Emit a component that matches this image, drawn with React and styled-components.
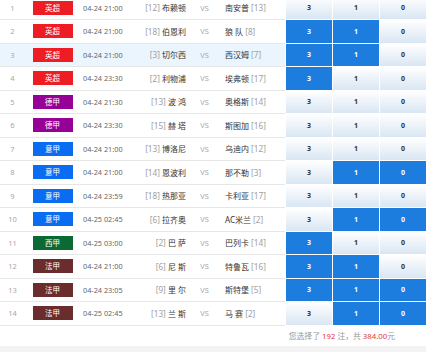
import React from 'react';
import styled, { createGlobalStyle } from 'styled-components';

const GlobalStyle = createGlobalStyle`
  html, body {
    margin: 0;
    padding: 0;
    background: #fff;
    overflow: hidden;
  }
  body {
    font-family: "Noto Sans", "Noto Sans CJK SC", sans-serif;
  }
`;

const LEAGUE_COLORS = {
  英超: '#ee1d23',
  德甲: '#960096',
  意甲: '#0a6cf0',
  西甲: '#0b6a34',
  法甲: '#6a2c2c',
};

const matches = [
  { league: '英超', time: '04-24 21:00', hr: 12, home: '布赖顿', away: '南安普', ar: 13, sel: [] },
  { league: '英超', time: '04-24 21:00', hr: 18, home: '伯恩利', away: '狼 队', ar: 8, sel: [0, 1] },
  { league: '英超', time: '04-24 21:00', hr: 3, home: '切尔西', away: '西汉姆', ar: 7, sel: [0, 1], hover: true },
  { league: '英超', time: '04-24 23:30', hr: 2, home: '利物浦', away: '埃弗顿', ar: 17, sel: [0] },
  { league: '德甲', time: '04-24 21:30', hr: 13, home: '波 鸿', away: '奥格斯', ar: 14, sel: [] },
  { league: '德甲', time: '04-24 23:30', hr: 15, home: '赫 塔', away: '斯图加', ar: 16, sel: [] },
  { league: '意甲', time: '04-24 21:00', hr: 13, home: '博洛尼', away: '乌迪内', ar: 12, sel: [] },
  { league: '意甲', time: '04-24 21:00', hr: 14, home: '恩波利', away: '那不勒', ar: 3, sel: [1, 2] },
  { league: '意甲', time: '04-24 23:59', hr: 18, home: '热那亚', away: '卡利亚', ar: 17, sel: [] },
  { league: '意甲', time: '04-25 02:45', hr: 6, home: '拉齐奥', away: 'AC米兰', ar: 2, sel: [1, 2] },
  { league: '西甲', time: '04-25 03:00', hr: 2, home: '巴 萨', away: '巴列卡', ar: 14, sel: [0] },
  { league: '法甲', time: '04-24 21:00', hr: 6, home: '尼 斯', away: '特鲁瓦', ar: 16, sel: [0, 1] },
  { league: '法甲', time: '04-24 23:05', hr: 9, home: '里 尔', away: '斯特堡', ar: 5, sel: [0, 1, 2] },
  { league: '法甲', time: '04-25 02:45', hr: 13, home: '兰 斯', away: '马 赛', ar: 2, sel: [1, 2] },
];

const Page = styled.div`
  width: 426px;
  margin-top: -3.5px;
`;

const Row = styled.div`
  display: flex;
  height: 23.5px;
`;

const Info = styled.div`
  display: grid;
  grid-template-columns: 25px 55px 60px 48px 33px 64px;
  align-items: center;
  width: 285px;
  box-sizing: border-box;
  border-bottom: 1px solid #e6e6e6;
  background: ${(p) => (p.$hover ? '#eaf5fd' : '#fff')};
`;

const Num = styled.span`
  text-align: center;
  font-size: 7.5px;
  color: #a8a8a8;
`;

const Badge = styled.span`
  justify-self: center;
  width: 40px;
  height: 14px;
  line-height: 14px;
  text-align: center;
  font-size: 7.5px;
  color: #fff;
  background: ${(p) => p.$color};
`;

const Time = styled.span`
  padding-left: 3px;
  font-size: 7.3px;
  color: #666;
  white-space: nowrap;
`;

const Home = styled.span`
  text-align: right;
  padding-right: 2px;
  font-size: 8px;
  color: #333;
  white-space: nowrap;
`;

const Away = styled.span`
  padding-left: 4px;
  font-size: 8px;
  color: #333;
  white-space: nowrap;
`;

const Rank = styled.span`
  color: #a0a0a0;
  font-size: 8.2px;
`;

const Vs = styled.span`
  text-align: center;
  font-size: 7.5px;
  color: #aaa;
`;

const Odds = styled.div`
  display: flex;
  flex: 1;
`;

const Cell = styled.div`
  flex: 1;
  display: flex;
  align-items: center;
  justify-content: center;
  box-sizing: border-box;
  border-left: 1px solid #fff;
  border-bottom: 1px solid #fff;
  font-size: 7px;
  font-weight: 700;
  color: ${(p) => (p.$on ? '#fff' : '#333')};
  background: ${(p) => (p.$on ? '#1c7ddf' : 'linear-gradient(#ffffff, #d9e6f3)')};
`;

const Footer = styled.div`
  height: 20px;
  display: flex;
  align-items: center;
  justify-content: flex-end;
  padding-right: 31px;
  font-size: 7.8px;
  color: #999;
  background: #fff;
`;

const Red = styled.span`
  color: #e8383d;
`;

const Bottom = styled.div`
  height: 12px;
  background: #f3f3f3;
`;

export default function App() {
  return (
    <>
      <GlobalStyle />
      <Page>
        {matches.map((m, i) => (
          <Row key={i}>
            <Info $hover={m.hover}>
              <Num>{i + 1}</Num>
              <Badge $color={LEAGUE_COLORS[m.league]}>{m.league}</Badge>
              <Time>{m.time}</Time>
              <Home>
                <Rank>[{m.hr}]</Rank> {m.home}
              </Home>
              <Vs>VS</Vs>
              <Away>
                {m.away} <Rank>[{m.ar}]</Rank>
              </Away>
            </Info>
            <Odds>
              {['3', '1', '0'].map((o, j) => (
                <Cell key={o} $on={m.sel.includes(j)}>
                  {o}
                </Cell>
              ))}
            </Odds>
          </Row>
        ))}
        <Footer>
          您选择了&nbsp;<Red>192</Red>&nbsp;注，共&nbsp;<Red>384.00</Red>元
        </Footer>
        <Bottom />
      </Page>
    </>
  );
}
